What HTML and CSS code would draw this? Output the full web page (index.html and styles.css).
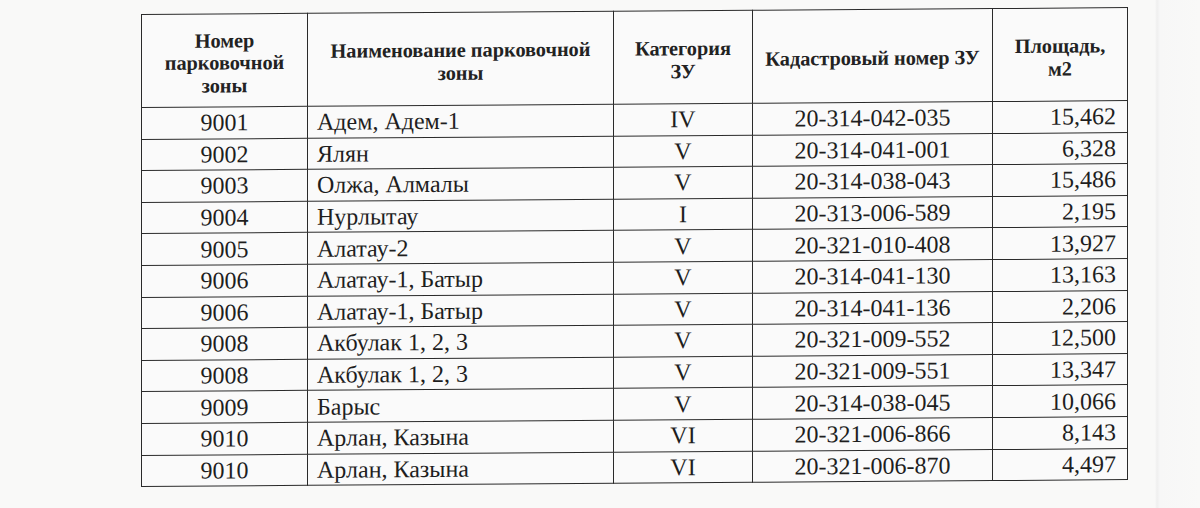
FILE: index.html
```html
<!DOCTYPE html>
<html lang="ru">
<head>
<meta charset="utf-8">
<title>Парковочные зоны</title>
<link rel="stylesheet" href="styles.css">
</head>
<body>
<div class="page">
<table class="zones">
<colgroup>
<col class="c1"><col class="c2"><col class="c3"><col class="c4"><col class="c5">
</colgroup>
<thead>
<tr>
<th>Номер<br>парковочной<br>зоны</th>
<th>Наименование парковочной<br>зоны</th>
<th>Категория<br>ЗУ</th>
<th>Кадастровый номер ЗУ</th>
<th>Площадь,<br>м2</th>
</tr>
</thead>
<tbody>
<tr><td class="ctr">9001</td><td class="name">Адем, Адем-1</td><td class="ctr">IV</td><td class="ctr">20-314-042-035</td><td class="num">15,462</td></tr>
<tr><td class="ctr">9002</td><td class="name">Ялян</td><td class="ctr">V</td><td class="ctr">20-314-041-001</td><td class="num">6,328</td></tr>
<tr><td class="ctr">9003</td><td class="name">Олжа, Алмалы</td><td class="ctr">V</td><td class="ctr">20-314-038-043</td><td class="num">15,486</td></tr>
<tr><td class="ctr">9004</td><td class="name">Нурлытау</td><td class="ctr">I</td><td class="ctr">20-313-006-589</td><td class="num">2,195</td></tr>
<tr><td class="ctr">9005</td><td class="name">Алатау-2</td><td class="ctr">V</td><td class="ctr">20-321-010-408</td><td class="num">13,927</td></tr>
<tr><td class="ctr">9006</td><td class="name">Алатау-1, Батыр</td><td class="ctr">V</td><td class="ctr">20-314-041-130</td><td class="num">13,163</td></tr>
<tr><td class="ctr">9006</td><td class="name">Алатау-1, Батыр</td><td class="ctr">V</td><td class="ctr">20-314-041-136</td><td class="num">2,206</td></tr>
<tr><td class="ctr">9008</td><td class="name">Акбулак 1, 2, 3</td><td class="ctr">V</td><td class="ctr">20-321-009-552</td><td class="num">12,500</td></tr>
<tr><td class="ctr">9008</td><td class="name">Акбулак 1, 2, 3</td><td class="ctr">V</td><td class="ctr">20-321-009-551</td><td class="num">13,347</td></tr>
<tr><td class="ctr">9009</td><td class="name">Барыс</td><td class="ctr">V</td><td class="ctr">20-314-038-045</td><td class="num">10,066</td></tr>
<tr><td class="ctr">9010</td><td class="name">Арлан, Казына</td><td class="ctr">VI</td><td class="ctr">20-321-006-866</td><td class="num">8,143</td></tr>
<tr><td class="ctr">9010</td><td class="name">Арлан, Казына</td><td class="ctr">VI</td><td class="ctr">20-321-006-870</td><td class="num">4,497</td></tr>
</tbody>
</table>
</div>
</body>
</html>
```
FILE: styles.css
```css
html, body {
  margin: 0;
  padding: 0;
}
body {
  width: 1200px;
  height: 508px;
  overflow: hidden;
  background: #f9f9f8;
  color: #1e1e1e;
  font-family: "Liberation Serif", "Times New Roman", serif;
}
.page {
  padding: 14px 0 0 141px;
  height: 494px;
  background: linear-gradient(to right, #f9f9f8 0, #f9f9f8 1155px, #efefef 1157px, #f7f7f7 1160px, #f9f9f8 1200px);
}
.zones {
  border-collapse: collapse;
  table-layout: fixed;
  width: 986px;
  transform: skewY(-0.4deg);
  transform-origin: 0 0;
  background: #fafafa;
}
.c1 { width: 166px; }
.c2 { width: 306px; }
.c3 { width: 139px; }
.c4 { width: 240px; }
.c5 { width: 135px; }
.zones th, .zones td {
  border: 1.5px solid #2a2a2a;
  vertical-align: middle;
}
.zones th {
  height: 87px;
  padding: 5px 4px 0;
  font-size: 20.3px;
  font-weight: bold;
  line-height: 22.5px;
  text-align: center;
  color: #222;
}
.zones td {
  height: 30.6px;
  padding: 0;
  font-size: 24px;
  line-height: 30px;
  white-space: nowrap;
}
.zones td.ctr { text-align: center; }
.zones td.name { text-align: left; padding-left: 9px; }
.zones td.num { text-align: right; padding-right: 11px; }
```
